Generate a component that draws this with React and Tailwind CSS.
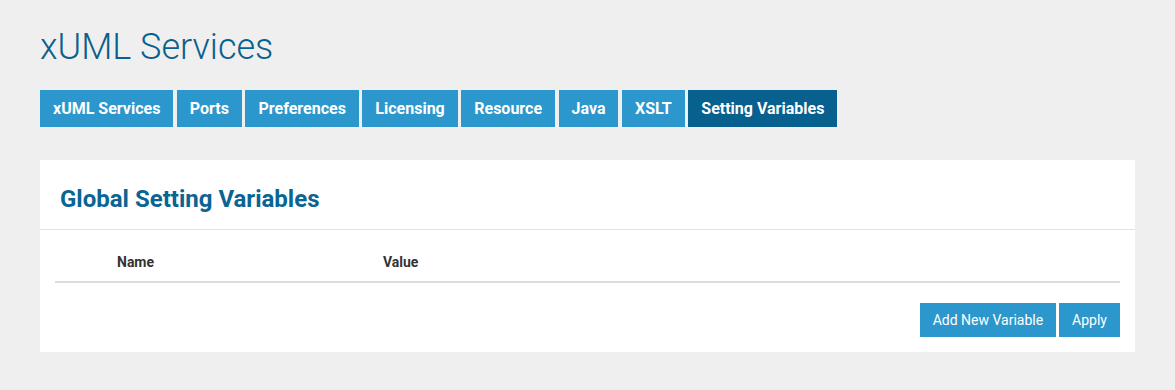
import React from 'react';

const tabs = ['xUML Services', 'Ports', 'Preferences', 'Licensing', 'Resource', 'Java', 'XSLT', 'Setting Variables'];

export default function App() {
  return (
    <div className="min-h-[390px] bg-[#efefef] px-10 pt-[26px] font-['Roboto',sans-serif]">
      <h1 className="text-[36px] leading-[42px] text-[#0b5f8e] font-light">xUML Services</h1>

      {/* Tabs */}
      <div className="mt-[22px] flex gap-[3.5px]">
        {tabs.map((t, i) => (
          <button
            key={t}
            className={`h-[37px] px-[13px] text-[16px] font-bold text-white ${
              i === tabs.length - 1 ? 'bg-[#07608e]' : 'bg-[#2b97cc]'
            }`}
          >
            {t}
          </button>
        ))}
      </div>

      {/* Card */}
      <div className="mt-[33px] bg-white">
        <div className="h-[70px] flex items-center px-5 pt-[8px] border-b border-[#e3e3e3]">
          <h2 className="text-[24px] font-bold text-[#0a6494]">Global Setting Variables</h2>
        </div>
        <div className="px-[15px] pt-[14px] pb-[15px]">
          <div className="flex h-[39px] items-center border-b-2 border-[#dcdcdc] text-[14px] font-bold text-[#333]">
            <div className="w-[62px]" />
            <div className="w-[266px]">Name</div>
            <div>Value</div>
          </div>
          <div className="mt-[20px] flex justify-end gap-[3px]">
            <button className="h-[34px] px-[13px] bg-[#2b97cc] text-white text-[14px]">Add New Variable</button>
            <button className="h-[34px] px-[13px] bg-[#2b97cc] text-white text-[14px]">Apply</button>
          </div>
        </div>
      </div>
    </div>
  );
}
